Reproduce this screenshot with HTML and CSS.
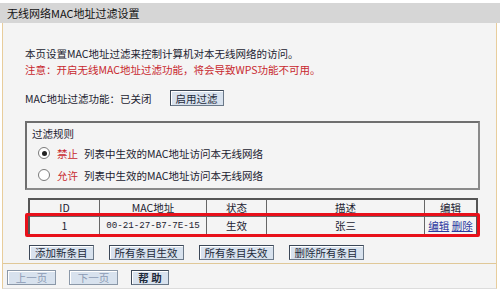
FILE: index.html
```html
<!DOCTYPE html>
<html>
    <head>
        <title>无线网络MAC地址过滤设置</title>
        <meta charset="UTF-8">
        <link rel="stylesheet" href="styles.css">
    </head>
    <body>
        <div class="title-bar">无线网络MAC地址过滤设置</div>
        <div class="panel">
            <div class="content">
                <p class="intro">本页设置MAC地址过滤来控制计算机对本无线网络的访问。</p>
                <p class="warn">注意：开启无线MAC地址过滤功能，将会导致WPS功能不可用。</p>
                <div class="status-row">
                    <span>MAC地址过滤功能：已关闭</span>
                    <button class="btn status-btn">启用过滤</button>
                </div>
                <!-- filter rule box -->
                <div class="rules">
                    <div class="rules-title">过滤规则</div>
                    <label class="rule">
                        <span class="radio checked"></span>
                        <span class="red">禁止</span>
                        <span>列表中生效的MAC地址访问本无线网络</span>
                    </label>
                    <label class="rule">
                        <span class="radio"></span>
                        <span class="red">允许</span>
                        <span>列表中生效的MAC地址访问本无线网络</span>
                    </label>
                </div>
                <div class="table-wrap">
                    <table class="list">
                        <tr>
                            <th class="c-id">ID</th>
                            <th class="c-mac">MAC地址</th>
                            <th class="c-state">状态</th>
                            <th class="c-desc">描述</th>
                            <th class="c-edit">编辑</th>
                        </tr>
                        <tr>
                            <td>1</td>
                            <td class="mac">00-21-27-B7-7E-15</td>
                            <td>生效</td>
                            <td>张三</td>
                            <td><a href="#">编辑</a> <a href="#">删除</a></td>
                        </tr>
                    </table>
                    <!-- highlight over the entry row -->
                    <div class="highlight"></div>
                </div>
                <div class="actions">
                    <button class="btn">添加新条目</button>
                    <button class="btn">所有条目生效</button>
                    <button class="btn">所有条目失效</button>
                    <button class="btn">删除所有条目</button>
                </div>
            </div>
            <div class="footer">
                <button class="btn disabled">上一页</button>
                <button class="btn disabled">下一页</button>
                <button class="btn bold">帮 助</button>
            </div>
        </div>
    </body>
</html>
```

FILE: styles.css
```css
body {
    margin: 0px;
    background: #ffffff;
    font-family: "Noto Sans CJK SC", sans-serif;
    font-size: 10.5px;
    color: #222230;
}
p {
    margin: 0;
}
.title-bar {
    margin-top: 3px;
    height: 20px;
    line-height: 20px;
    padding-left: 7px;
    background: #d6d6d6;
    color: #111;
    font-size: 11px;
}
.panel {
    margin: 0 3px 0 2px;
    border-left: 1px solid #e8cd9c;
    border-right: 1px solid #e8cd9c;
    border-bottom: 1px solid #dcdcdc;
    background: #f4f4f4;
    height: 265px;
}
.content {
    padding: 23px 0 0 22px;
    height: 217px;
    border-bottom: 1px solid #e0c898;
}
.intro, .warn {
    line-height: 16px;
}
.warn {
    color: #c8282e;
}
.status-row {
    display: flex;
    align-items: center;
    gap: 18px;
    margin-top: 12px;
    height: 16px;
}
.btn {
    font-family: "Noto Sans CJK SC", sans-serif;
    font-size: 10.5px;
    color: #1e2a3a;
    background: #d8e2ee;
    border: 1px solid #3c4858;
    border-right-color: #6a7888;
    border-bottom-color: #6a7888;
    box-shadow: inset 1px 1px 0 #ffffff;
    height: 16px;
    line-height: 13px;
    padding: 0 5px;
    margin: 0;
    white-space: nowrap;
}
.rules {
    margin-top: 15px;
    width: 446px;
    height: 62px;
    border: 2px solid #6e6e6e;
    border-right-color: #8a8a8a;
    border-bottom-color: #8a8a8a;
    padding: 3px 0 0 5px;
}
.rules-title {
    line-height: 16px;
}
.rule {
    display: flex;
    align-items: center;
    gap: 6px;
    height: 22px;
    padding-left: 6px;
}
.rule .red {
    color: #c8282e;
}
.radio {
    width: 10px;
    height: 10px;
    border: 1px solid #7a7a7a;
    border-radius: 50%;
    background: #ffffff;
    position: relative;
    margin-right: 1px;
}
.radio.checked:after {
    content: "";
    position: absolute;
    left: 2.5px;
    top: 2.5px;
    width: 5px;
    height: 5px;
    border-radius: 50%;
    background: #222;
}
.table-wrap {
    position: relative;
    margin-top: 8px;
    width: 450px;
    margin-left: 3px;
}
.list {
    width: 450px;
    border-collapse: collapse;
    border: 2px solid #555;
    text-align: center;
}
.list th, .list td {
    border: 1px solid #666;
    padding: 0;
    font-weight: normal;
    line-height: 16px;
}
.list th {
    height: 16px;
}
.list td {
    height: 17px;
}
.c-id { width: 69px; }
.c-mac { width: 106px; }
.c-state { width: 59px; }
.c-desc { width: 157px; }
.mac {
    font-family: "Liberation Mono", monospace;
    font-size: 9.2px;
}
.list a {
    color: #2c3aa0;
}
.highlight {
    position: absolute;
    left: -3px;
    top: 15px;
    width: 449px;
    height: 18px;
    border: 3px solid #e8101a;
    border-radius: 2px;
}
.actions {
    display: flex;
    gap: 15px;
    margin-top: 9px;
    margin-left: 4px;
}
.actions .btn {
    height: 15px;
}
.footer {
    display: flex;
    gap: 13px;
    padding: 6px 0 0 4px;
}
.footer .btn {
    height: 15px;
    width: 49px;
    padding: 0;
}
.footer .bold {
    width: 38px;
    font-weight: bold;
}
.btn.disabled {
    color: #8b9ab4;
    border-color: #8b98a8;
}
```
